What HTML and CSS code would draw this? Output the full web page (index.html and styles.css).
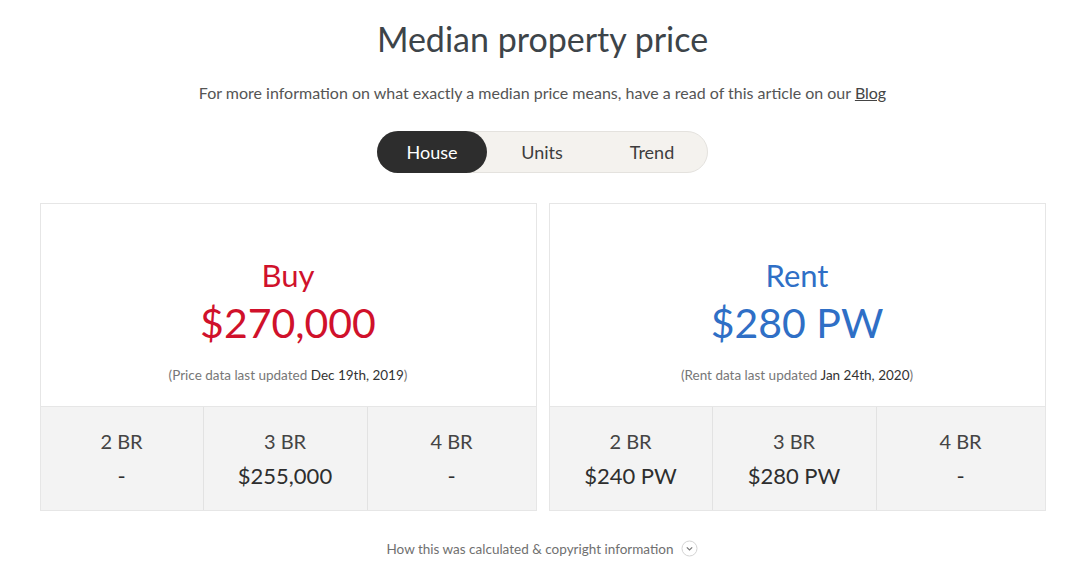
FILE: index.html
```html
<!DOCTYPE html>
<html lang="en">
<head>
  <meta charset="UTF-8">
  <title>Median property price</title>
  <link rel="stylesheet" href="styles.css">
</head>
<body>
  <div class="container">
    <h2>Median property price</h2>
    <p class="intro">For more information on what exactly a median price means, have a read of this article on our <a href="#">Blog</a></p>

    <div class="tabs">
      <span class="tab active">House</span>
      <span class="tab">Units</span>
      <span class="tab">Trend</span>
    </div>

    <div class="cards">
      <div class="card">
        <div class="card-top">
          <div class="label buy">Buy</div>
          <div class="price buy">$270,000</div>
          <div class="updated">(Price data last updated <b>Dec 19th, 2019</b>)</div>
        </div>
        <div class="rooms">
          <div class="room"><span>2 BR</span><strong>-</strong></div>
          <div class="room"><span>3 BR</span><strong>$255,000</strong></div>
          <div class="room"><span>4 BR</span><strong>-</strong></div>
        </div>
      </div>

      <div class="card">
        <div class="card-top">
          <div class="label rent">Rent</div>
          <div class="price rent">$280 PW</div>
          <div class="updated">(Rent data last updated <b>Jan 24th, 2020</b>)</div>
        </div>
        <div class="rooms">
          <div class="room"><span>2 BR</span><strong>$240 PW</strong></div>
          <div class="room"><span>3 BR</span><strong>$280 PW</strong></div>
          <div class="room"><span>4 BR</span><strong>-</strong></div>
        </div>
      </div>
    </div>

    <div class="footnote">
      How this was calculated &amp; copyright information
      <svg width="17" height="17" viewBox="0 0 17 17">
        <circle cx="8.5" cy="8.5" r="7.5" fill="none" stroke="#d4d4d4" stroke-width="1"/>
        <path d="M5.8 7.3 L8.5 10 L11.2 7.3" fill="none" stroke="#777" stroke-width="1.2"/>
      </svg>
    </div>
  </div>
</body>
</html>
```

FILE: styles.css
```css
body {
  font-family: Lato, "Open Sans", sans-serif;
  margin: 0;
  background-color: #fff;
  color: #3d4449;
}

.container {
  width: 1006px;
  margin: 0 auto;
  padding: 19px 0 0 5px;
  text-align: center;
}

h2 {
  font-size: 34px;
  font-weight: 400;
  margin: 0;
  line-height: 40px;
}

.intro {
  font-size: 16px;
  color: #555;
  margin: 24px 0 0;
  line-height: 20px;
}

.intro a {
  color: #444;
}

.tabs {
  display: inline-flex;
  margin-top: 28px;
  background: #f4f2ee;
  border: 1px solid #e4e2de;
  border-radius: 22px;
  width: 331px;
  height: 42px;
  box-sizing: border-box;
}

.tab {
  flex: 1;
  line-height: 40px;
  font-size: 18px;
  color: #3d3d3d;
  border-radius: 21px;
}

.tab.active {
  background: #2d2d2d;
  color: #fff;
  margin: -1px 0 -1px -1px;
  line-height: 42px;
}

.cards {
  display: grid;
  grid-template-columns: 1fr 1fr;
  gap: 12px;
  margin-top: 30px;
}

.card {
  border: 1px solid #e6e6e6;
}

.card-top {
  height: 203px;
  padding-top: 52px;
  box-sizing: border-box;
  border-bottom: 1px solid #e6e6e6;
}

.label {
  font-size: 31px;
  line-height: 38px;
}

.price {
  font-size: 41px;
  line-height: 50px;
  margin-top: 4px;
}

.buy {
  color: #d0112b;
}

.rent {
  color: #2f6fc6;
}

.updated {
  font-size: 13.5px;
  color: #777;
  margin-top: 19px;
}

.updated b {
  font-weight: 400;
  color: #333;
}

.rooms {
  display: grid;
  grid-template-columns: 162px 164px 1fr;
  background: #f3f3f3;
  height: 103px;
}

.room {
  display: flex;
  flex-direction: column;
  padding-top: 22px;
  border-left: 1px solid #e2e2e2;
}

.room:first-child {
  border-left: none;
}

.room span {
  font-size: 20px;
  color: #444;
  line-height: 24px;
}

.room strong {
  font-size: 22px;
  font-weight: 400;
  color: #2e2e2e;
  line-height: 26px;
  margin-top: 10px;
}

.footnote {
  margin-top: 29px;
  font-size: 13.5px;
  color: #707070;
  display: flex;
  justify-content: center;
  align-items: center;
  gap: 8px;
}
```
